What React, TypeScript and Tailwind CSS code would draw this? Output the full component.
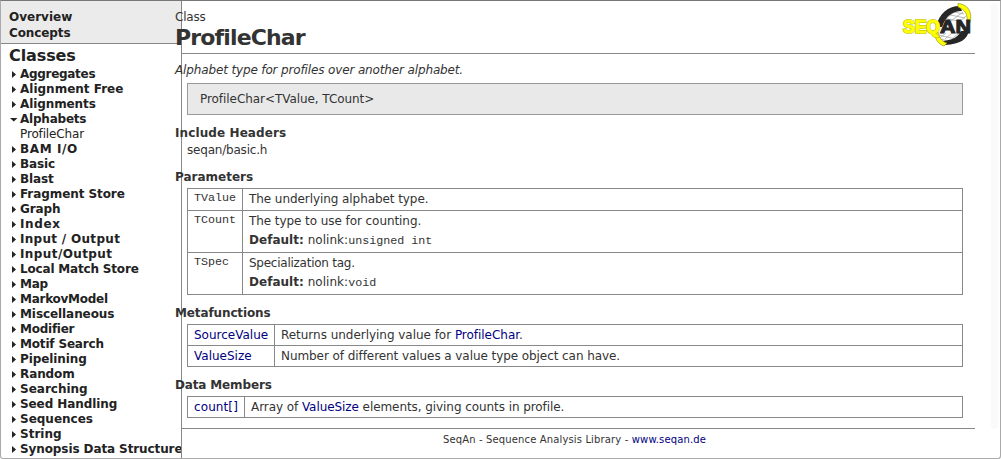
import type { ReactNode } from "react";

type Entry = [label: string, tracking: string];

const before: Entry[] = [
  ["Aggregates", "tracking-[-0.3px]"],
  ["Alignment Free", "tracking-[0px]"],
  ["Alignments", "tracking-[-0.1px]"],
];
const after: Entry[] = [
  ["BAM I/O", "tracking-[0.6px]"],
  ["Basic", "tracking-[-0.1px]"],
  ["Blast", "tracking-[-0.1px]"],
  ["Fragment Store", "tracking-[-0.08px]"],
  ["Graph", "tracking-[-0.1px]"],
  ["Index", "tracking-[0.6px]"],
  ["Input / Output", "tracking-[0.3px]"],
  ["Input/Output", "tracking-[0.4px]"],
  ["Local Match Store", "tracking-[-0.18px]"],
  ["Map", "tracking-[-0.3px]"],
  ["MarkovModel", "tracking-[-0.27px]"],
  ["Miscellaneous", "tracking-[-0.08px]"],
  ["Modifier", "tracking-[-0.25px]"],
  ["Motif Search", "tracking-[-0.17px]"],
  ["Pipelining", "tracking-[-0.1px]"],
  ["Random", "tracking-[-0.1px]"],
  ["Searching", "tracking-[0px]"],
  ["Seed Handling", "tracking-[-0.08px]"],
  ["Sequences", "tracking-[0px]"],
  ["String", "tracking-[0px]"],
  ["Synopsis Data Structure", "tracking-[-0.1px]"],
];

function Item({ label, tracking, open = false }: { label: string; tracking: string; open?: boolean }) {
  return (
    <li className="flex h-[15px] items-center whitespace-nowrap text-[12px] font-bold leading-[15px]">
      <svg className="mr-[2px] h-[9px] w-[9px] shrink-0" viewBox="0 0 9 9" fill="#222">
        {open ? <path d="M1 3h7.5L4.75 6.5z" /> : <path d="M3 1v7L7 4.5z" />}
      </svg>
      <span className={tracking}>{label}</span>
    </li>
  );
}

function Heading({ children, className }: { children: ReactNode; className: string }) {
  return <h2 className={`h-[15px] text-[12px] font-bold leading-[15px] ${className}`}>{children}</h2>;
}

function Row({ name, nameClass, height, children }: { name: string; nameClass: string; height: string; children: ReactNode }) {
  return (
    <div className={`flex border-b border-[#888] ${height}`}>
      <div className={`shrink-0 border-r border-[#888] pl-[6px] ${nameClass}`}>{name}</div>
      <div className="whitespace-nowrap pl-[6px] leading-5 tracking-[-0.07px]">{children}</div>
    </div>
  );
}

function Link({ children }: { children: ReactNode }) {
  return <a className="text-[#000080]">{children}</a>;
}

function Logo() {
  return (
    <svg className="h-[46px] w-[72px]" viewBox="0 0 72 46">
      <path d="M36 24C40 12 48 6 57 6L67 12L68 26C64 36 56 40 44 40L36 34z" fill="#fff" />
      <path d="M48 9l15 3M45 12l19 4M42 16l20 4M37 33l18 4M40 37l10 3M50 8l-8 9M56 8l-14 11M62 10l-12 9M65 14l-7 6M45 31l-6 5M51 31l-7 6M58 31l-7 6" fill="none" stroke="#aaa" strokeWidth=".8" />
      <path d="M35 25C38 12 46 4 59 4L61 9C51 9 45 14 41 25z" fill="#262626" />
      <path d="M68 29C66 37 60 42 44 43L42 39C52 38 57 35 60 29z" fill="#262626" />
      <path d="M57 1.5C66 2 72 9 69 21L66 20C67 12 64 8 57 5z" fill="#ff0" stroke="#85851a" strokeWidth=".6" />
      <path d="M33 30C34 37 37 42 43 44L46 41C40 39 38 35 37 30z" fill="#ff0" stroke="#85851a" strokeWidth=".6" />
      <text x="2" y="31" fontFamily="Liberation Sans, sans-serif" fontSize="18.5" fontWeight="700" fill="#ff0" stroke="#98981c" strokeWidth="1.7" paintOrder="stroke" textLength="37" lengthAdjust="spacingAndGlyphs">SEQ</text>
      <text x="2" y="31" aria-hidden="true" fontFamily="Liberation Sans, sans-serif" fontSize="18.5" fontWeight="700" fill="#ff0" stroke="#ff0" strokeWidth=".9" textLength="37" lengthAdjust="spacingAndGlyphs">SEQ</text>
      <text x="39" y="31" fontFamily="Liberation Sans, sans-serif" fontSize="18.5" fontWeight="700" fill="#262626" stroke="#262626" strokeWidth="1.1" textLength="31" lengthAdjust="spacingAndGlyphs">AN</text>
    </svg>
  );
}

const mono = "font-['Liberation_Mono',monospace] text-[11.7px] tracking-[0px]";

export default function App() {
  return (
    <div className="flex h-[459px] w-[1001px] overflow-hidden rounded-b-[3px] border border-[#aaa] border-t-[#777] bg-white font-['DejaVu_Sans',Verdana,sans-serif] text-[12px] text-[#333]">
      <nav className="h-full w-[181px] shrink-0 overflow-hidden border-r border-[#888] text-[#222]">
        <div className="h-[43px] border-b border-[#888] bg-[#ebebeb] pl-2 pt-2 text-[12px] font-bold leading-4">
          <div>Overview</div>
          <div className="tracking-[-0.1px]">Concepts</div>
        </div>
        <h1 className="h-[23px] pl-2 pt-[2px] text-[16px] font-bold leading-5 tracking-[-0.1px]">Classes</h1>
        <ul className="pl-2">
          {before.map(([s, t]) => <Item key={s} label={s} tracking={t} />)}
          <Item label="Alphabets" tracking="tracking-[-0.22px]" open />
          <li className="h-[15px] pl-[11px] text-[12px] leading-[15px] tracking-[-0.15px]">ProfileChar</li>
          {after.map(([s, t]) => <Item key={s} label={s} tracking={t} />)}
        </ul>
      </nav>
      <main className="z-10 -ml-[7px] w-[800px] shrink-0">
        <header className="flex h-[52px] justify-between">
          <div>
            <div className="h-6 pt-2 leading-4 tracking-[-0.2px]">Class</div>
            <h1 className="text-[22px] font-bold leading-[26px] tracking-[-0.85px]">ProfileChar</h1>
          </div>
          <div className="mr-[2px] pt-px"><Logo /></div>
        </header>
        <div className="ml-[6px] border-t border-[#888]" />
        <p className="mt-[8px] h-4 italic leading-4 tracking-[-0.14px]">Alphabet type for profiles over another alphabet.</p>
        <div className="ml-3 mt-[5px] h-8 w-[776px] border border-[#999] bg-[#e9e9e9] pl-3 leading-[30px] tracking-[-0.06px]">ProfileChar&lt;TValue, TCount&gt;</div>
        <Heading className="mt-[11px] tracking-[0.1px]">Include Headers</Heading>
        <p className="ml-3 mt-px h-4 leading-4 tracking-[-0.2px]">seqan/basic.h</p>
        <Heading className="mt-[12px]">Parameters</Heading>
        <div className="ml-3 mt-[3px] w-[776px] border-x border-t border-[#888]">
          <Row name="TValue" nameClass={`w-[55px] leading-[18px] ${mono}`} height="h-[22px]">The underlying alphabet type.</Row>
          <Row name="TCount" nameClass={`w-[55px] leading-[18px] ${mono}`} height="h-[42px]">
            <div>The type to use for counting.</div>
            <div className="-mt-px leading-5 tracking-[0.03px]"><b>Default:</b> nolink:<span className={mono}>unsigned int</span></div>
          </Row>
          <Row name="TSpec" nameClass={`w-[55px] leading-[18px] ${mono}`} height="h-[42px]">
            <div className="tracking-[-0.25px]">Specialization tag.</div>
            <div className="-mt-px leading-5 tracking-[0.03px]"><b>Default:</b> nolink:<span className={mono}>void</span></div>
          </Row>
        </div>
        <Heading className="mt-[11px] tracking-[-0.12px]">Metafunctions</Heading>
        <div className="ml-3 mt-[3px] w-[776px] border-x border-t border-[#888]">
          <Row name="SourceValue" nameClass="w-[87px] leading-5 text-[#000080]" height="h-[21px]"><span className="tracking-[-0.03px]">Returns underlying value for <Link>ProfileChar</Link>.</span></Row>
          <Row name="ValueSize" nameClass="w-[87px] leading-5 text-[#000080]" height="h-[21px]">Number of different values a value type object can have.</Row>
        </div>
        <Heading className="mt-[11px] tracking-[-0.15px]">Data Members</Heading>
        <div className="ml-3 mt-[3px] w-[776px] border-x border-t border-[#888]">
          <Row name="count[]" nameClass="w-[57px] leading-5 tracking-[0.1px] text-[#000080]" height="h-[21px]">Array of <Link>ValueSize</Link> elements, giving counts in profile.</Row>
        </div>
        <footer className="ml-[6px] mt-[10px] border-t border-[#888] pr-[7px] pt-[3px] text-center text-[10px] leading-4 tracking-[0.14px]">
          SeqAn - Sequence Analysis Library - <Link>www.seqan.de</Link>
        </footer>
      </main>
      <div className="ml-4 mt-[2px] h-[426px] w-[7px] rounded bg-[#fafafa]" />
    </div>
  );
}
